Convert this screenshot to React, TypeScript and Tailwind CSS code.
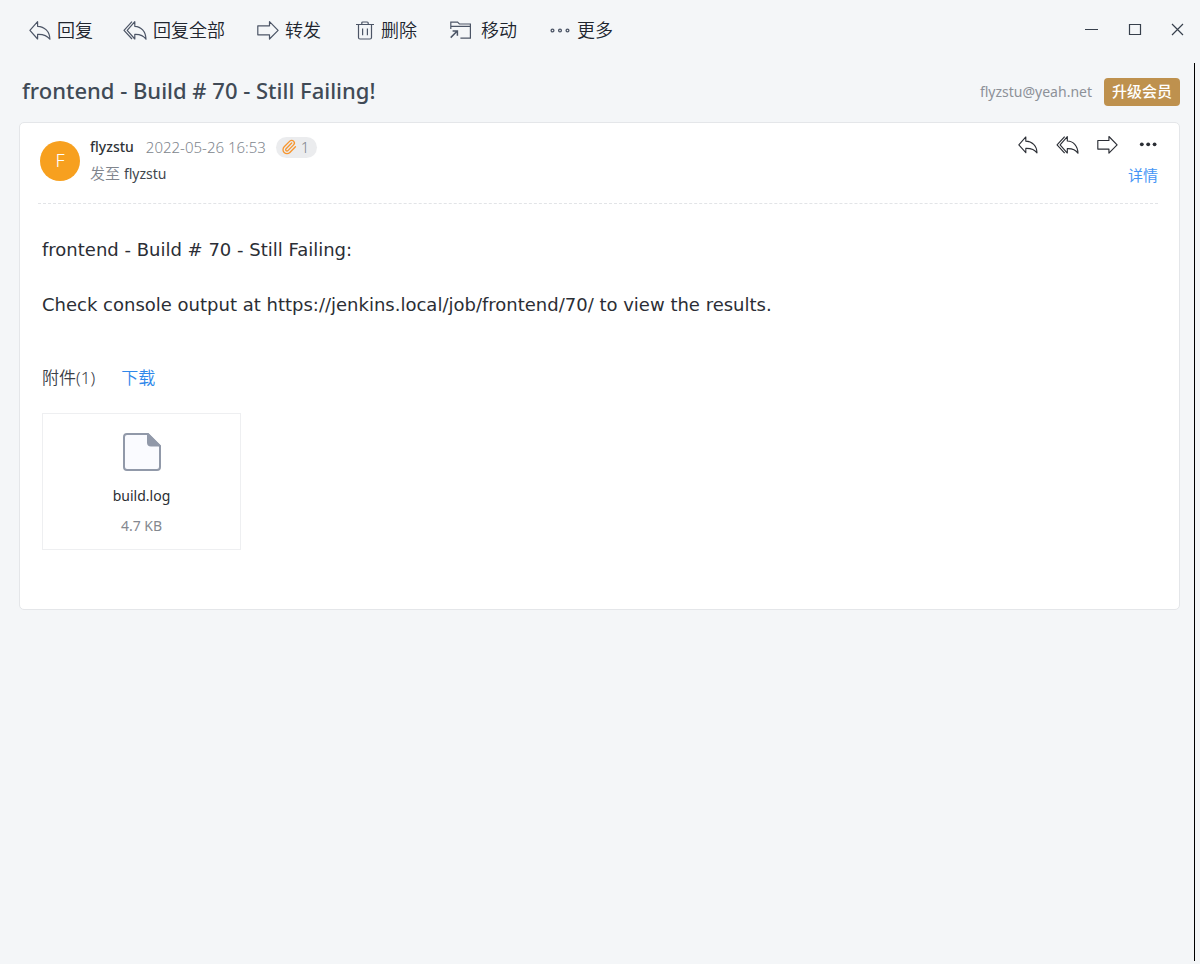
import type { ReactNode } from "react";
import { Paperclip } from "lucide-react";

const UI_FONT = "font-['Noto_Sans','Noto_Sans_CJK_SC',sans-serif]";

type IconProps = { className?: string };

function ReplyIcon({ className }: IconProps) {
  return (
    <svg viewBox="0 0 22 20" className={className} fill="none" stroke="currentColor" strokeWidth="1.2" strokeLinejoin="round" aria-hidden="true">
      <path d="M.9 10.3 8.6 1.7V6.3C15.4 6.4 20.8 11.4 20.9 19.2 18 15.2 14 14.1 8.6 14.3V19Z" />
    </svg>
  );
}

function ReplyAllIcon({ className }: IconProps) {
  return (
    <svg viewBox="0 0 24 20" className={className} fill="none" stroke="currentColor" strokeWidth="1.2" strokeLinejoin="round" aria-hidden="true">
      <path d="M9 1.6 1 10.3 9 19" />
      <path d="M4.2 10.3 11.8 1.7V6.3C18 6.4 22.8 11.4 23 19.2 20.4 15.2 17 14.1 11.8 14.3V19Z" />
    </svg>
  );
}

function ForwardIcon({ className }: IconProps) {
  return (
    <svg viewBox="0 0 22 20" className={className} fill="none" stroke="currentColor" strokeWidth="1.2" strokeLinejoin="round" aria-hidden="true">
      <path d="M.8 5.8H12.5V1.6L21.1 10.3 12.5 19V14.8H.8Z" />
    </svg>
  );
}

function TrashIcon({ className }: IconProps) {
  return (
    <svg viewBox="0 0 22 20" className={className} fill="none" stroke="currentColor" strokeWidth="1.2" aria-hidden="true">
      <path d="M3 4.5H21M8.8 4.2V3Q8.8 2 9.8 2H14.2Q15.2 2 15.2 3V4.2M5.5 4.5V17.5Q5.5 19 7 19H17Q18.5 19 18.5 17.5V4.5M9.6 8.6V15.2M14.4 8.6V15.2" />
    </svg>
  );
}

function MoveIcon({ className }: IconProps) {
  return (
    <svg viewBox="0 0 26 20" className={className} fill="none" stroke="currentColor" strokeWidth="1.2" aria-hidden="true">
      <path d="M1.8 9V2.2H8.6L10.4 4H21.4V18.1H11.4M1.8 6.4H21.4" />
      <path d="M1.7 17.6 8 11.3M3.6 10.9H8.4V15.7" strokeWidth="1.5" />
    </svg>
  );
}

function MoreIcon({ className }: IconProps) {
  return (
    <svg viewBox="0 0 22 20" className={className} fill="none" stroke="currentColor" strokeWidth="1.3" aria-hidden="true">
      <circle cx="3.5" cy="10.5" r="1.4" />
      <circle cx="11" cy="10.5" r="1.4" />
      <circle cx="18.5" cy="10.5" r="1.4" />
    </svg>
  );
}

function DotsIcon({ className }: IconProps) {
  return (
    <svg viewBox="0 0 20 20" className={className} fill="currentColor" aria-hidden="true">
      <circle cx="3.8" cy="10.3" r="1.9" />
      <circle cx="10.2" cy="10.3" r="1.9" />
      <circle cx="16.6" cy="10.3" r="1.9" />
    </svg>
  );
}

function FileIcon({ className }: IconProps) {
  return (
    <svg viewBox="0 0 38 38" className={className} aria-hidden="true">
      <path d="M4 1H25L37 13V34Q37 37 34 37H4Q1 37 1 34V4Q1 1 4 1Z" fill="#fafbff" stroke="#9199a9" strokeWidth="2" />
      <path d="M24 0.5H25.5L37.5 12.5V13.5H28Q24 13.5 24 9.5Z" fill="#9199a9" />
    </svg>
  );
}

function ToolButton({ icon, label, wide = false }: { icon: ReactNode; label: string; wide?: boolean }) {
  return (
    <button type="button" className="flex items-center gap-1.5 text-lg leading-6 font-[350] text-[#20252e]">
      <span className={wide ? "w-[26px] text-[#4c5566]" : "w-[22px] text-[#4c5566]"}>{icon}</span>
      {label}
    </button>
  );
}

function Toolbar() {
  return (
    <header className="flex h-[63px] items-center justify-between pr-[10px] pb-1 pl-[29px]">
      <nav className="flex items-center gap-8" aria-label="邮件操作">
        <ToolButton icon={<ReplyIcon className="h-5 w-[22px]" />} label="回复" />
        <ToolButton icon={<ReplyAllIcon className="-ml-0.5 h-5 w-6 max-w-none" />} label="回复全部" />
        <ToolButton icon={<ForwardIcon className="h-5 w-[22px]" />} label="转发" />
        <ToolButton icon={<TrashIcon className="h-5 w-[22px]" />} label="删除" />
        <ToolButton icon={<MoveIcon className="h-5 w-[26px]" />} label="移动" wide />
        <ToolButton icon={<MoreIcon className="h-5 w-[22px]" />} label="更多" />
      </nav>
      <div className="flex items-center gap-7 text-[#37404c]">
        <button type="button" aria-label="最小化">
          <svg viewBox="0 0 15 15" className="size-[15px]" fill="none" stroke="currentColor" aria-hidden="true">
            <path d="M1 7.5H14" />
          </svg>
        </button>
        <button type="button" aria-label="最大化">
          <svg viewBox="0 0 15 15" className="size-[15px]" fill="none" stroke="currentColor" strokeWidth="1.2" aria-hidden="true">
            <path d="M2.5 2.5H13.5V12.5H2.5Z" />
          </svg>
        </button>
        <button type="button" aria-label="关闭">
          <svg viewBox="0 0 15 15" className="size-[15px]" fill="none" stroke="currentColor" strokeWidth="1.2" aria-hidden="true">
            <path d="M2 2 13 13M13 2 2 13" />
          </svg>
        </button>
      </div>
    </header>
  );
}

function MessageHeader() {
  return (
    <div className="mr-[21px] ml-[18px] flex h-[81px] justify-between border-b border-dashed border-[#e2e4e7]">
      <div className="flex pt-[18px] pl-0.5">
        <div className="flex size-10 items-center justify-center rounded-full bg-[#f7a01f] pb-0.5 text-lg font-light text-white">F</div>
        <div className="-mt-1.5 ml-2.5 flex flex-col gap-0.5">
          <div className="flex h-6 items-center text-[15px] font-[350] text-[#80858d]">
            <span className="text-sm font-medium text-[#2f3338]">flyzstu</span>
            <time className="ml-3">2022-05-26 16:53</time>
            <span className="ml-2.5 flex h-[21px] items-center gap-1 rounded-full bg-[#ebecee] pr-2 pl-[5px]">
              <Paperclip className="size-4 text-[#f7962f]" strokeWidth={2} aria-hidden="true" />1
            </span>
          </div>
          <p className="text-[15px] leading-6 font-[350] text-[#80858d]">
            发至 <span className="text-sm font-normal text-[#41464d]">flyzstu</span>
          </p>
        </div>
      </div>
      <div className="flex flex-col items-end pt-[11px]">
        <div className="flex items-center gap-[18px] text-[#2b2e35]">
          <button type="button" aria-label="回复"><ReplyIcon className="h-[19px] w-5" /></button>
          <button type="button" aria-label="回复全部"><ReplyAllIcon className="h-[19px] w-[23px]" /></button>
          <button type="button" aria-label="转发"><ForwardIcon className="h-[19px] w-[21px]" /></button>
          <button type="button" aria-label="更多"><DotsIcon className="ml-0.5 size-5" /></button>
        </div>
        <a href="#details" className="mt-[9px] text-[15px] leading-6 text-[#4595f5]">详情</a>
      </div>
    </div>
  );
}

export default function App() {
  return (
    <div className={`flex min-h-screen flex-col bg-[#f4f6f8] pr-[5px] pb-[3px] ${UI_FONT}`}>
      <Toolbar />
      <main className="grow border-r border-black pt-[15px] pr-[14px] pl-[19px]">
        <div className="flex h-7 items-center justify-between pl-[3px]">
          <h1 className="pb-1 text-[22px] leading-6 font-medium text-[#404a56]">frontend - Build # 70 - Still Failing!</h1>
          <div className="flex items-center gap-3">
            <span className="text-sm text-[#8d9198]">flyzstu@yeah.net</span>
            <button type="button" className="h-7 rounded bg-[#be914e] px-2 pb-px text-[15px] font-medium text-white">升级会员</button>
          </div>
        </div>
        <article className="mt-4 rounded-[5px] border border-[#e4e6e9] bg-white pb-[59px]">
          <MessageHeader />
          <div className="px-[22px] pt-8 font-['DejaVu_Sans',sans-serif] text-lg leading-[27px] text-[#2b2e35]">
            <p>frontend - Build # 70 - Still Failing:</p>
            <p className="mt-7">Check console output at https://jenkins.local/job/frontend/70/ to view the results.</p>
          </div>
          <section className="px-[22px] pt-12">
            <div className="flex gap-[26px] text-[17px] leading-6 font-[350]">
              <h2 className="text-[#3c4047]">附件(1)</h2>
              <a href="#download" className="text-[#3088ea]">下载</a>
            </div>
            <div className="mt-[23px] flex h-[137px] w-[199px] flex-col items-center border border-[#eeeff1] pt-[19px] text-sm leading-[30px]">
              <FileIcon className="size-[38px]" />
              <p className="mt-[10px] leading-[30px] text-[#2b2e33]">build.log</p>
              <p className="leading-[30px] text-[#84888f]">4.7 KB</p>
            </div>
          </section>
        </article>
      </main>
    </div>
  );
}
